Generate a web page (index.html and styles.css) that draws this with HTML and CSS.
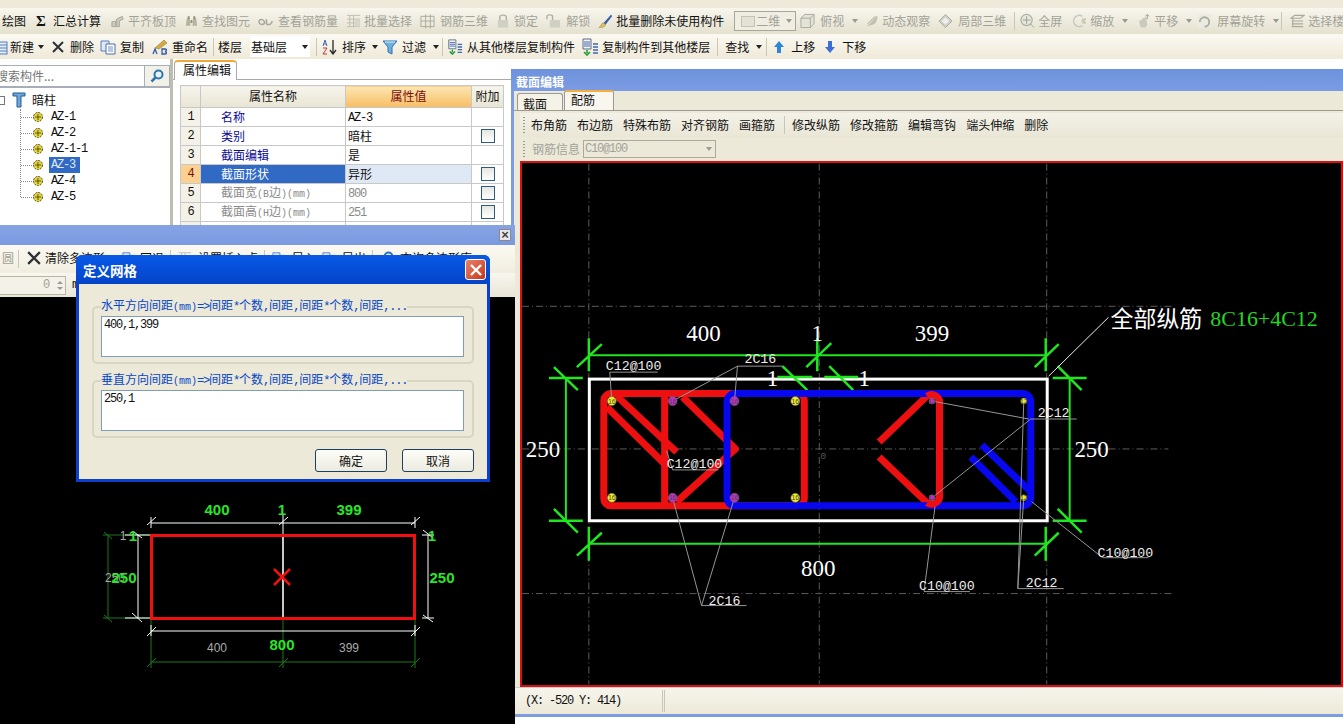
FILE: index.html
```html
<!DOCTYPE html>
<html lang="zh-CN">
<head>
<meta charset="utf-8">
<title>截面编辑</title>
<link rel="stylesheet" href="styles.css">
</head>
<body>
<svg class="defs" aria-hidden="true">
  <symbol id="i-align" viewBox="0 0 16 16"><path d="M2 14V9l4-1v6zM7 14V6l6-3 1 3-4 2v6z" fill="#c9c9bd" stroke="#a9a99c"/></symbol>
  <symbol id="i-find" viewBox="0 0 16 16"><path d="M2 13l1-8h3l1 8zM9 13l1-8h3l1 8z" fill="#b7b29c"/><path d="M4 3h2v3H4zM10 3h2v3h-2zM7 7h2v3H7z" fill="#8f8c7a"/></symbol>
  <symbol id="i-look" viewBox="0 0 16 16"><path d="M1 9c0-4 5-3 6 0 0 3-5 4-6 0zM9 6v5c3 2 6 0 6-3" fill="none" stroke="#a6a69a" stroke-width="1.6"/></symbol>
  <symbol id="i-batch" viewBox="0 0 16 16"><path d="M1 2h14M1 6h14M1 10h14M1 14h14M4 2v12M8 2v12" stroke="#bdbdb0" fill="none"/><path d="M9 7h6v7H9z" fill="#d6d6ca"/></symbol>
  <symbol id="i-bar3d" viewBox="0 0 16 16"><path d="M1 3h14v11H1zM6 1v15M11 1v15M1 8h14" fill="none" stroke="#a9a99c"/></symbol>
  <symbol id="i-lock" viewBox="0 0 16 16"><rect x="2" y="7" width="11" height="8" fill="#cfcfc4"/><path d="M4 7V4c0-3 7-3 7 0v3" fill="none" stroke="#b0b0a4" stroke-width="1.5"/></symbol>
  <symbol id="i-unlock" viewBox="0 0 16 16"><rect x="4" y="7" width="11" height="8" fill="#cfcfc4"/><path d="M1 6V3c0-2 6-2 6 0v4" fill="none" stroke="#b0b0a4" stroke-width="1.5"/></symbol>
  <symbol id="i-brush" viewBox="0 0 16 16"><path d="M14 1L6 10l2 2 7-9z" fill="#3a5fa8"/><path d="M6 10c-3 0-2 3-5 5 4 0 7-1 7-3z" fill="#e0c060" stroke="#8a7a30" stroke-width=".5"/></symbol>
  <symbol id="i-cube" viewBox="0 0 16 16"><path d="M1 5l4-4h10v10l-4 4H1zM1 5h10v10M11 5l4-4" fill="#e4e3d8" stroke="#aaa99c"/></symbol>
  <symbol id="i-orbit" viewBox="0 0 16 16"><path d="M2 14l4-3 8-9c1 4-1 9-5 10-3 1-5 1-7 2z" fill="#bfc2ad"/><path d="M4 11l8-8" stroke="#9c9f8a" fill="none"/></symbol>
  <symbol id="i-local" viewBox="0 0 16 16"><path d="M8 1l7 7-7 7-7-7z" fill="#cfcfc4" stroke="#aaa99c"/><path d="M4 8l4-4 4 4-4 4z" fill="#eee"/></symbol>
  <symbol id="i-full" viewBox="0 0 16 16"><circle cx="7" cy="7" r="6" fill="#e6e6dc" stroke="#a9b2a4" stroke-width="1.3"/><path d="M7 3v8M3 7h8M11 11l4 4" stroke="#9aa095" fill="none"/></symbol>
  <symbol id="i-zoom" viewBox="0 0 16 16"><path d="M11 3a6 6 0 1 0 0 10" fill="none" stroke="#c3c8c0" stroke-width="1.6"/><path d="M11 6h4M10 8h4M11 10h4" stroke="#a9a99c"/></symbol>
  <symbol id="i-pan" viewBox="0 0 16 16"><path d="M3 8l3-1 1-2 4-1 1 8-2 3H5z" fill="#c9c9bd"/><path d="M12 1v5M10 3l2-2 2 2" stroke="#9c9c90" fill="none"/></symbol>
  <symbol id="i-rot" viewBox="0 0 16 16"><rect x="1" y="1" width="14" height="14" fill="#ecebe2"/><path d="M3 9a5 5 0 1 1 5 5" fill="none" stroke="#a8aea2" stroke-width="2"/></symbol>
  <symbol id="i-layer" viewBox="0 0 16 16"><path d="M1 5l4-3h10L11 5zM2 8h12M2 11h12M2 14h12M3 5v9" fill="none" stroke="#aaa99c" stroke-width="1.2"/></symbol>
  <symbol id="i-new" viewBox="0 0 16 16"><rect x="1" y="3" width="14" height="12" fill="#e8eef8" stroke="#4f7fc0"/><path d="M1 6h14M1 9h14M1 12h14" stroke="#4f7fc0"/></symbol>
  <symbol id="i-x" viewBox="0 0 12 12"><path d="M1 1l10 10M11 1L1 11" stroke="#2e3238" stroke-width="2" fill="none"/></symbol>
  <symbol id="i-x-w" viewBox="0 0 12 12"><path d="M1 1l10 10M11 1L1 11" stroke="#fff" stroke-width="2.4" fill="none"/></symbol>
  <symbol id="i-copy" viewBox="0 0 16 16"><path d="M1 2h8v10H1z" fill="#dfe8f7" stroke="#5a7fb8"/><path d="M6 5h9v10H6z" fill="#fff" stroke="#4a6fa8"/><path d="M8 8h5M8 10h5M8 12h5" stroke="#6f8fc0"/></symbol>
  <symbol id="i-ren" viewBox="0 0 16 16"><path d="M3 9l9-8 3 3-8 6z" fill="#d9a93f" stroke="#7a8a50" stroke-width=".6"/><path d="M1 15l2-5 2 5M10 15v-5h3c2 0 2 2 0 2.5 2 .5 2 2.5 0 2.5z" fill="none" stroke="#2f5aa8" stroke-width="1.3"/></symbol>
  <symbol id="i-az" viewBox="0 0 16 16"><path d="M1 7l2-6 2 6M2 5h2" stroke="#3f66b8" fill="none"/><path d="M1 9h4l-4 6h4" stroke="#c03a30" fill="none"/><path d="M11 1v13M8 11l3 4 3-4" stroke="#2a2a2a" fill="none" stroke-width="1.3"/></symbol>
  <symbol id="i-filter" viewBox="0 0 16 16"><path d="M1 2h14L10 8v7l-4-2V8z" fill="#6fb0e0" stroke="#2f74b0"/><path d="M3 3h10" stroke="#d8f0ff"/></symbol>
  <symbol id="i-cfrom" viewBox="0 0 18 18"><path d="M2 1h8v10H2z" fill="#f4f4f4" stroke="#5a6a80"/><path d="M3 4h6M3 6h6M3 8h6" stroke="#3f66b8"/><path d="M6 12v3M3 14l3 3 3-3" stroke="#1f9a3a" stroke-width="1.6" fill="none"/><path d="M12 6h5M12 9h5M12 12h5M12 15h5" stroke="#3f66b8" stroke-width="1.5"/></symbol>
  <symbol id="i-up" viewBox="0 0 10 12"><path d="M5 0l5 6H7v6H3V6H0z" fill="#2f86d8"/></symbol>
  <symbol id="i-down" viewBox="0 0 10 12"><path d="M5 12l5-6H7V0H3v6H0z" fill="#3f6ed8"/></symbol>
  <symbol id="i-funnel" viewBox="0 0 14 16"><path d="M1 1h12v3H9v11H5V4H1z" fill="#6fa8d8" stroke="#1f5a98"/></symbol>
  <symbol id="i-gear" viewBox="0 0 12 12"><circle cx="6" cy="6" r="4.5" fill="#e6d83a" stroke="#4a4a20" stroke-dasharray="2 1"/><path d="M3 6h6M6 3v6" stroke="#55551f"/></symbol>
  <symbol id="i-search" viewBox="0 0 14 14"><circle cx="8.5" cy="5.5" r="4" fill="#e8f2fb" stroke="#2f74b0" stroke-width="2"/><path d="M5.5 8.5L1.5 12.5" stroke="#2f74b0" stroke-width="2.5"/></symbol>
</svg>

<div class="app">
  <div class="topstrip"></div>
  <div class="toolbar bar-one">
    <span class="tool">绘图</span>
    <b class="sigma ml2">Σ</b>
    <span class="tool ml1">汇总计算</span>
    <span class="tool off n ml1"><svg class="ic"><use href="#i-align"/></svg>平齐板顶</span>
    <span class="tool off n"><svg class="ic"><use href="#i-find"/></svg>查找图元</span>
    <span class="tool off w"><svg class="ic"><use href="#i-look"/></svg>查看钢筋量</span>
    <span class="tool off n"><svg class="ic"><use href="#i-batch"/></svg>批量选择</span>
    <span class="tool off w"><svg class="ic"><use href="#i-bar3d"/></svg>钢筋三维</span>
    <span class="tool off n"><svg class="ic"><use href="#i-lock"/></svg>锁定</span>
    <span class="tool off w"><svg class="ic"><use href="#i-unlock"/></svg>解锁</span>
    <span class="tool n"><svg class="ic"><use href="#i-brush"/></svg>批量删除未使用构件</span>
    <span class="viewbox ml2"><i class="viewicon"></i>二维<i class="caret gray"></i></span>
    <span class="tool off w ml-4"><svg class="ic"><use href="#i-cube"/></svg>俯视</span><i class="caret gray"></i>
    <span class="tool off n ml-2"><svg class="ic"><use href="#i-orbit"/></svg>动态观察</span>
    <span class="tool off w"><svg class="ic"><use href="#i-local"/></svg>局部三维</span>
    <i class="sep"></i>
    <span class="tool off n ml-3"><svg class="ic"><use href="#i-full"/></svg>全屏</span>
    <span class="tool off n ml2"><svg class="ic"><use href="#i-zoom"/></svg>缩放</span><i class="caret gray"></i>
    <span class="tool off n"><svg class="ic"><use href="#i-pan"/></svg>平移</span><i class="caret gray"></i>
    <span class="tool off w ml-3"><svg class="ic"><use href="#i-rot"/></svg>屏幕旋转</span><i class="caret gray"></i>
    <i class="sep ml-6"></i>
    <span class="tool off n"><svg class="ic"><use href="#i-layer"/></svg>选择楼层</span>
  </div>
  <div class="toolbar bar-two">
    <span class="tool t2 clip-new"><svg class="ic"><use href="#i-new"/></svg>新建</span><i class="caret ml-4"></i>
    <span class="tool del"><svg class="ic12"><use href="#i-x"/></svg>删除</span>
    <span class="tool t4 ml-2"><svg class="ic"><use href="#i-copy"/></svg>复制</span>
    <span class="tool t4"><svg class="ic"><use href="#i-ren"/></svg>重命名</span>
    <i class="sep ml-3"></i>
    <span class="tool ml-4">楼层</span>
    <span class="floor">基础层<i class="caret"></i></span>
    <i class="sep ml-2"></i>
    <span class="tool t4 ml-3"><svg class="ic"><use href="#i-az"/></svg>排序</span><i class="caret ml-2"></i>
    <span class="tool t4 ml-4"><svg class="ic"><use href="#i-filter"/></svg>过滤</span><i class="caret ml-1"></i>
    <i class="sep ml-5"></i>
    <span class="tool t4 ml-4"><svg class="ic"><use href="#i-cfrom"/></svg>从其他楼层复制构件</span>
    <span class="tool n ml-2"><svg class="ic18"><use href="#i-cfrom"/></svg>复制构件到其他楼层</span>
    <i class="sep ml-1"></i>
    <span class="tool ml-1">查找</span><i class="caret ml-1"></i>
    <i class="sep ml-4"></i>
    <span class="tool t7 ml-1"><svg class="ic10"><use href="#i-up"/></svg>上移</span>
    <span class="tool t7 ml2"><svg class="ic10"><use href="#i-down"/></svg>下移</span>
  </div>

  <div class="main">
    <aside class="leftpane">
      <div class="search">
        <span class="search-text">搜索构件...</span>
        <span class="search-btn"><svg class="ic14"><use href="#i-search"/></svg></span>
      </div>
      <div class="tree">
        <div class="tree-root"><i class="expander"></i><svg class="funnel"><use href="#i-funnel"/></svg><span>暗柱</span></div>
        <ul class="tree-list">
          <li class="tree-row"><i class="dash"></i><svg class="ic12"><use href="#i-gear"/></svg><span class="tree-label">AZ-1</span></li>
          <li class="tree-row"><i class="dash"></i><svg class="ic12"><use href="#i-gear"/></svg><span class="tree-label">AZ-2</span></li>
          <li class="tree-row"><i class="dash"></i><svg class="ic12"><use href="#i-gear"/></svg><span class="tree-label">AZ-1-1</span></li>
          <li class="tree-row"><i class="dash"></i><svg class="ic12"><use href="#i-gear"/></svg><span class="tree-label selected">AZ-3</span></li>
          <li class="tree-row"><i class="dash"></i><svg class="ic12"><use href="#i-gear"/></svg><span class="tree-label">AZ-4</span></li>
          <li class="tree-row"><i class="dash"></i><svg class="ic12"><use href="#i-gear"/></svg><span class="tree-label">AZ-5</span></li>
        </ul>
      </div>
    </aside>
    <section class="props">
      <div class="props-tabs"><span class="props-tab">属性编辑</span></div>
      <table class="ptable">
        <colgroup><col class="c-idx"><col class="c-name"><col class="c-val"><col class="c-add"></colgroup>
        <thead><tr><th></th><th>属性名称</th><th class="th-val">属性值</th><th>附加</th></tr></thead>
        <tbody>
          <tr><td class="idx">1</td><td class="pname">名称</td><td class="pval"><span class="m">AZ-3</span></td><td></td></tr>
          <tr><td class="idx">2</td><td class="pname">类别</td><td class="pval">暗柱</td><td class="add"><i class="check"></i></td></tr>
          <tr><td class="idx">3</td><td class="pname">截面编辑</td><td class="pval">是</td><td></td></tr>
          <tr class="sel"><td class="idx">4</td><td class="pname">截面形状</td><td class="pval">异形</td><td class="add"><i class="check"></i></td></tr>
          <tr class="dim"><td class="idx">5</td><td class="pname">截面宽<span class="mm">(B</span>边<span class="mm">)(mm)</span></td><td class="pval"><span class="m">800</span></td><td class="add"><i class="check"></i></td></tr>
          <tr class="dim"><td class="idx">6</td><td class="pname">截面高<span class="mm">(H</span>边<span class="mm">)(mm)</span></td><td class="pval"><span class="m">251</span></td><td class="add"><i class="check"></i></td></tr>
          <tr><td class="idx">7</td><td></td><td></td><td></td></tr>
        </tbody>
      </table>
    </section>
  </div>

  <section class="win-section">
    <header class="win-title">截面编辑</header>
    <div class="sec-tabs"><span class="sec-tab">截面</span><span class="sec-tab active">配筋</span></div>
    <div class="sec-tools">
      <i class="grip"></i>
      <span>布角筋</span><span>布边筋</span><span>特殊布筋</span><span>对齐钢筋</span><span>画箍筋</span>
      <i class="sep"></i>
      <span>修改纵筋</span><span>修改箍筋</span><span>编辑弯钩</span><span>端头伸缩</span><span>删除</span>
    </div>
    <div class="sec-info">
      <i class="grip"></i>
      <span class="off">钢筋信息</span>
      <span class="sec-combo"><span class="m">C10@100</span><i class="caret gray"></i></span>
    </div>
    <div class="sec-canvas">
      <svg class="drawing" viewBox="522 164 821 522">
        <g class="cl">
          <path d="M522 307H1175M522 450H1170M522 595H1175M589 164V686M820 164V686M1048 164V686"/>
        </g>
        <rect class="white-box" x="589.5" y="380" width="459" height="142"/>
        <g class="dimg">
          <path d="M589 356H1048M589 545H1048M566 379V522M1071 379V522"/>
          <path d="M589 339V372M577 368L602 345M818 339V372M807 368L832 344M1047 339V372M1036 368L1060 345"/>
          <path d="M589 528V562M577 557L602 534M1047 528V562M1036 557L1060 534"/>
          <path d="M549 379H583M554 368L578 391M549 522H583M554 510L578 534"/>
          <path d="M1054 379H1088M1059 367L1083 391M1054 522H1088M1059 510L1083 534"/>
          <path d="M778 378H813M825 378H859M783 367L808 391M830 367L854 391"/>
        </g>
        <g class="red">
          <rect x="604" y="394.5" width="201" height="112.5" rx="7"/>
          <path d="M665 394V507M617 397L677 453M607 408L667 467M683 398L736 450L677 503M880 443L928 397A8 8 0 0 1 940.5 403V498A8 8 0 0 1 928 504L880 458"/>
        </g>
        <g class="blue">
          <rect x="727.5" y="394.5" width="304.5" height="112.5" rx="8"/>
          <path d="M983 446L1031 492M972 458L1017 503"/>
        </g>
        <path class="red-over" d="M928 397A8 8 0 0 1 940.5 403V498A8 8 0 0 1 928 504"/>
        <g class="leader">
          <path d="M610 373H658M610 373L612 402M738 367H783M738 367L673 402M738 367L735 402"/>
          <path d="M673 471H719M667 452L673 471M702 607H747M702 607L673 499M702 607L735 499"/>
          <path d="M1032 420H1078M933 402L1030 420M933 499L1032 420M1025 402L1019 590M1025 499L1019 590M1019 590H1065"/>
          <path d="M925 593H971M925 593L936 508M1104 559H1150M1104 559L1033 503"/>
        </g>
        <path class="white-line" d="M1050 377L1110 318"/>
        <g class="rebar-y">
          <circle cx="612" cy="402" r="4.5"/><circle cx="612" cy="499" r="4.5"/><circle cx="796" cy="402" r="4.5"/><circle cx="796" cy="499" r="4.5"/>
          <circle cx="1025" cy="402" r="3"/><circle cx="1025" cy="499" r="3"/>
        </g>
        <g class="rebar-m">
          <circle cx="673" cy="402" r="4.5"/><circle cx="673" cy="499" r="4.5"/><circle cx="735" cy="402" r="4.5"/><circle cx="735" cy="499" r="4.5"/>
          <circle cx="933" cy="402" r="3"/><circle cx="933" cy="499" r="3"/>
        </g>
        <g class="rebar-t">
          <text x="612" y="404.5">16</text><text x="612" y="501.5">16</text><text x="796" y="404.5">16</text><text x="796" y="501.5">16</text>
          <text x="673" y="404.5">16</text><text x="673" y="501.5">16</text><text x="735" y="404.5">16</text><text x="735" y="501.5">16</text>
          <text x="933" y="404.5">12</text><text x="933" y="501.5">12</text><text x="1025" y="404.5">12</text><text x="1025" y="501.5">12</text>
        </g>
        <g class="bignum">
          <text x="704" y="342">400</text><text x="818" y="342">1</text><text x="933" y="342">399</text>
          <text x="543" y="458">250</text><text x="1093" y="458">250</text><text x="819" y="577">800</text>
          <text x="773" y="387">1</text><text x="865" y="387">1</text>
        </g>
        <g class="label">
          <text x="606" y="371">C12@100</text><text x="745" y="364">2C16</text>
          <text x="667" y="469">C12@100</text><text x="709" y="606">2C16</text>
          <text x="1039" y="418">2C12</text><text x="1027" y="588">2C12</text>
          <text x="920" y="591">C10@100</text><text x="1099" y="558">C10@100</text>
        </g>
        <text class="zero" x="821" y="460">0</text>
        <text class="allbar" x="1112" y="328">全部纵筋</text>
        <text class="allbar-v" x="1212" y="327">8C16+4C12</text>
      </svg>
    </div>
    <footer class="sec-status"><span class="m coord">(X: -520 Y: 414)</span><i class="status-div"></i></footer>
  </section>

  <section class="win-grid">
    <header class="grid-title"><span class="grid-close">×</span></header>
    <div class="grid-tools">
      <span class="off ml2">圆</span>
      <i class="sep"></i>
      <span class="tool del-2"><svg class="ic14"><use href="#i-x"/></svg>清除多边形</span>
      <span class="tool undo"><svg class="ic14"><use href="#i-copy"/></svg>回退</span>
      <i class="sep"></i>
      <span class="tool"><svg class="ic14"><use href="#i-batch"/></svg>设置插入点</span>
      <i class="sep"></i>
      <span class="tool"><svg class="ic14"><use href="#i-copy"/></svg>导入</span>
      <span class="tool"><svg class="ic14"><use href="#i-copy"/></svg>导出</span>
      <i class="sep"></i>
      <span class="tool"><svg class="ic14"><use href="#i-search"/></svg>查询多边形库</span>
    </div>
    <div class="grid-fields">
      <span class="spin"><span class="m off">0</span><i class="spin-btn"><i class="up"></i><i class="down"></i></i></span>
      <span class="m">m</span>
    </div>
    <div class="grid-canvas">
      <svg class="drawing" viewBox="0 297 515 427">
        <g class="dk">
          <path d="M108 535V618M103 535H151M103 618H151M104 532L112 539M104 615L112 622"/>
          <path d="M151 618V668M283 618V668M415 618V668M151 662H415M147 667L156 658M279 667L288 658M411 667L420 658"/>
        </g>
        <g class="wh">
          <path d="M151 523H415M151 517V528M415 517V528M147 525L156 517M411 525L420 517"/>
          <path d="M283 515V535M279 525L288 517"/>
          <path d="M138 535V618M125 535H151M125 618H151M134 532L142 538M132 613L142 622"/>
          <path d="M428 535V618M422 535H434M422 618H434M423 530L433 538M423 615L433 622"/>
          <path d="M151 631H415M151 625V636M415 625V636M147 636L156 627M411 636L420 627"/>
        </g>
        <rect class="red-rect" x="151.5" y="535.5" width="263" height="83"/>
        <path class="gr-mid" d="M283 537V617"/>
        <path class="red-x" d="M274 569L290 585M290 569L274 585"/>
        <g class="gray-t">
          <text x="217" y="652">400</text><text x="349" y="652">399</text><text x="115" y="582">250</text><text x="123" y="540">1</text>
        </g>
        <g class="green-t">
          <text x="217" y="515">400</text><text x="349" y="515">399</text><text x="282" y="515">1</text>
          <text x="124" y="583">250</text><text x="442" y="583">250</text><text x="133" y="541">1</text><text x="432" y="541">1</text>
          <text x="282" y="650">800</text>
        </g>
      </svg>
    </div>
  </section>

  <div class="dialog">
    <header class="dlg-title"><span>定义网格</span><span class="dlg-close"><svg class="ic12"><use href="#i-x-w"/></svg></span></header>
    <div class="dlg-body">
      <fieldset class="dlg-group">
        <legend>水平方向间距<span class="mm">(mm)</span><span class="m">=&gt;</span>间距<span class="m">*</span>个数<span class="m">,</span>间距<span class="m">,</span>间距<span class="m">*</span>个数<span class="m">,</span>间距<span class="m">,...</span></legend>
        <div class="dlg-input m">400,1,399</div>
      </fieldset>
      <fieldset class="dlg-group second">
        <legend>垂直方向间距<span class="mm">(mm)</span><span class="m">=&gt;</span>间距<span class="m">*</span>个数<span class="m">,</span>间距<span class="m">,</span>间距<span class="m">*</span>个数<span class="m">,</span>间距<span class="m">,...</span></legend>
        <div class="dlg-input m">250,1</div>
      </fieldset>
      <div class="dlg-actions"><button class="btn">确定</button><button class="btn">取消</button></div>
    </div>
  </div>
</div>
</body>
</html>
```

FILE: styles.css
```css
* { box-sizing: border-box; }
html, body { margin: 0; padding: 0; height: 100%; overflow: hidden; background: #fff; }
body { font: 12px/16px "Noto Sans CJK SC", "Liberation Sans", sans-serif; color: #111; }
i { font-style: normal; display: block; flex: none; }
.defs { position: absolute; width: 0; height: 0; }
.app { position: relative; width: 1343px; height: 724px; overflow: hidden; }
.m { font-family: "Liberation Mono", "Noto Sans CJK SC", monospace; font-size: 12px; letter-spacing: -1.2px; }
.mm { font-family: "Liberation Mono", monospace; font-size: 10px; }
.off { color: #a2a298; }

.topstrip { height: 8px; background: #efe9d9; }
.toolbar { display: flex; align-items: center; gap: 8px; white-space: nowrap; overflow: hidden; }
.bar-one { height: 26px; padding-left: 2px; background: linear-gradient(#f8f6ee, #e4e1ce); }
.bar-two { height: 25px; background: linear-gradient(#fbf9f2, #efe9d8); }
.tool { display: inline-flex; align-items: center; gap: 3px; flex: none; }
.tool.w { gap: 5px; }
.tool.t2 { gap: 2px; }
.tool.t4 { gap: 4px; }
.tool.t7 { gap: 7px; }
.tool.del { gap: 6px; }
.ic { width: 15px; height: 16px; flex: none; }
.bar-two .ic { width: 16px; }
.ic18 { width: 18px; height: 18px; flex: none; }
.ic14 { width: 14px; height: 14px; flex: none; }
.ic12 { width: 12px; height: 12px; flex: none; }
.ic10 { width: 10px; height: 12px; flex: none; }
.sigma { width: 8px; font: bold 15px/16px "Liberation Serif", serif; flex: none; }
.caret { width: 0; height: 0; border: 3px solid transparent; border-top: 4px solid #222; border-bottom: 0; }
.caret.gray { border-top-color: #9a9a90; }
.sep { width: 1px; height: 18px; background: #c9c6b3; }
.ml1 { margin-left: 1px; } .ml2 { margin-left: 2px; }
.ml-1 { margin-left: -1px; } .ml-2 { margin-left: -2px; } .ml-3 { margin-left: -3px; }
.ml-4 { margin-left: -4px; } .ml-5 { margin-left: -5px; } .ml-6 { margin-left: -6px; }
.clip-new { margin-left: -8px; }
.viewbox { display: flex; align-items: center; width: 62px; height: 20px; border: 1px solid #a8a898; color: #a2a298; background: #f0eee2; padding-left: 6px; flex: none; }
.viewicon { width: 14px; height: 11px; background: #e4e2d4; border: 1px solid #c4c2b4; margin-right: 1px; }
.viewbox .caret { margin-left: 6px; }
.floor { display: flex; align-items: center; width: 60px; height: 21px; background: #fff; padding-left: 1px; flex: none; justify-content: space-between; padding-right: 2px; }

.main { display: flex; height: 166px; }
.leftpane { width: 170px; flex: none; overflow: hidden; padding-top: 6px; }
.search { display: flex; height: 23px; border: 1px solid #a8aeb8; border-bottom-width: 2px; border-left: 0; }
.search-text { flex: 1; color: #777; margin-left: -4px; line-height: 20px; white-space: nowrap; }
.search-btn { width: 25px; display: flex; align-items: center; justify-content: center; border-left: 1px solid #a8aeb8; background: #f2f1e8; }
.tree { padding-top: 4px; }
.tree-root { display: flex; align-items: center; height: 16px; }
.expander { width: 5px; height: 9px; border: 1px solid #777; border-left: 0; margin-right: 7px; }
.funnel { width: 14px; height: 16px; margin-right: 6px; }
.tree-list { list-style: none; margin: 1px 0 0 20px; padding: 0; height: 88px; border-left: 1px dotted #888; }
.tree-row { display: flex; align-items: center; height: 16px; font: 12px/16px "Liberation Mono", monospace; letter-spacing: -1.2px; }
.dash { width: 11px; border-top: 1px dotted #888; }
.tree-label { margin-left: 5px; padding: 0 5px 0 2px; height: 16px; }
.tree-label.selected { background: #316ac5; color: #dfe7f6; width: 31px; }

.props { flex: 1; margin-left: 3px; box-shadow: -3px 0 0 #bdbdb0; overflow: hidden; }
.props-tabs { height: 21px; padding-left: 1px; padding-top: 1px; border-bottom: 1px solid #aaa; }
.props-tab { display: inline-block; width: 63px; height: 20px; padding: 0 0 0 8px; background: #fff; border: 1px solid #aaa; border-top: 2px solid #f0a838; border-bottom: 0; border-radius: 4px 4px 0 0; line-height: 15px; }
.ptable { border-collapse: collapse; table-layout: fixed; width: 323px; margin: 5px 0 0 7px; line-height: 14px; }
.c-idx { width: 20px; } .c-name { width: 145px; } .c-val { width: 126px; } .c-add { width: 32px; }
.ptable th, .ptable td { border: 1px solid #c8c8c8; padding: 0; height: 19px; font-weight: 400; overflow: hidden; }
.ptable tbody tr { height: 19px; }
.ptable th { height: 22px; padding-bottom: 2px; background: linear-gradient(#f7f5ec, #e8e5d4); text-align: center; }
.ptable .th-val { background: linear-gradient(#fce6b4, #f8bd62); color: #7a0f0f; }
.ptable .idx { text-align: center; background: #f4f2e8; font: 12px/14px "Liberation Mono", monospace; letter-spacing: -1.2px; }
.ptable .pname { padding-left: 20px; color: #0a0a96; }
.ptable .pval { padding-left: 2px; }
.add { text-align: center; }
.check { width: 14px; height: 14px; margin: 0 auto; border: 1px solid #2c5a80; background: linear-gradient(#e6e6e0, #fff); }
.ptable .sel .idx { background: #fcd08e; color: #7a0f0f; }
.ptable .sel .pname { background: #316ac5; color: #fff; }
.ptable .sel .pval { background: #dfe8f5; }
.ptable .dim .pname, .ptable .dim .pval { color: #8a8a8a; }

.win-section { position: absolute; z-index: 1; left: 511px; top: 69px; width: 832px; height: 648px; display: flex; flex-direction: column; background: #ece9d8; border-left: 3px solid #7e9de0; border-bottom: 3px solid #7e9de0; }
.win-title { height: 22px; flex: none; background: linear-gradient(#6e92dc, #7c9ce4); color: #fff; font-weight: 700; line-height: 25px; margin-left: -3px; padding-left: 5px; }
.sec-tabs { height: 20px; flex: none; display: flex; align-items: flex-end; padding-left: 3px; border-bottom: 1px solid #9c9c90; }
.sec-tab { width: 46px; height: 17px; padding-left: 5px; background: #f5f3e8; border: 1px solid #999; border-bottom: 0; border-radius: 3px 3px 0 0; line-height: 19px; }
.sec-tab.active { width: 50px; height: 20px; padding-left: 6px; background: #f8f6ee; border-top: 2px solid #f4ae3c; line-height: 16px; margin-left: 1px; }
.sec-tools { height: 24px; margin-top: 2px; flex: none; margin-left: 6px; display: flex; align-items: center; gap: 10px; background: linear-gradient(#f4f2e8, #e9e6d6); white-space: nowrap; }
.grip { width: 2px; height: 16px; margin-left: 3px; margin-right: -2px; background-image: linear-gradient(#9a9a8e 50%, transparent 50%); background-size: 2px 3px; }
.sec-tools .grip { margin-right: -4px; }
.sec-tools .sep { margin: 0 -3px 0 -1px; }
.sec-info { height: 24px; flex: none; margin-left: 6px; display: flex; align-items: center; gap: 3px; white-space: nowrap; }
.sec-info .grip { margin-right: 4px; }
.sec-combo { display: flex; align-items: center; justify-content: space-between; width: 133px; height: 18px; border: 1px solid #aaa99c; color: #a2a298; padding: 0 3px 0 1px; }
.sec-canvas { height: 526px; flex: none; margin-left: 6px; border: 2px solid #d81010; background: #000; }
.drawing { display: block; width: 100%; height: 100%; }
.sec-status { flex: 1; display: flex; align-items: center; padding-left: 11px; background: linear-gradient(#f7f5ec, #ece9d8); border-top: 1px solid #ccc; }
.coord { color: #111; width: 137px; }
.status-div { width: 3px; height: 22px; border-left: 1px solid #c8c6b8; border-right: 1px solid #c8c6b8; }

.cl path { fill: none; stroke: #5c5c5c; stroke-width: 1; stroke-dasharray: 7 3 1 3; }
.white-box { fill: none; stroke: #fff; stroke-width: 3; }
.dimg path { fill: none; stroke: #1fe61f; stroke-width: 2.5; }
.dimg path:first-child { stroke-width: 2; }
.red rect, .red path { fill: none; stroke: #ee1010; stroke-width: 7; stroke-linejoin: round; }
.red-over { fill: none; stroke: #ee1010; stroke-width: 7; }
.blue rect, .blue path { fill: none; stroke: #0808f0; stroke-width: 7; }
.leader path { fill: none; stroke: #969696; stroke-width: 1; }
.white-line { fill: none; stroke: #eee; stroke-width: 1; }
.rebar-y circle { fill: #f4ee20; stroke: #666; stroke-width: .6; }
.rebar-m circle { fill: #c030c8; stroke: #666; stroke-width: .6; }
.rebar-t text { fill: #444; font: 7px "Liberation Sans", sans-serif; text-anchor: middle; }
.bignum text { fill: #fff; font: 23px "Liberation Serif", serif; text-anchor: middle; }
.label text { fill: #eee; font: 13.3px "Liberation Mono", monospace; }
.zero { fill: #555; font: 10px "Liberation Mono", monospace; }
.allbar { fill: #fff; font: 23px "Noto Sans CJK SC", sans-serif; }
.allbar-v { fill: #22d622; font: 22px "Liberation Serif", serif; }

.win-grid { position: absolute; z-index: 2; left: 0; top: 225px; width: 515px; height: 499px; display: flex; flex-direction: column; background: #ece9d8; }
.grid-title { height: 20px; flex: none; display: flex; justify-content: flex-end; align-items: center; padding-right: 4px; background: linear-gradient(#86a3e4, #7a99e0); }
.grid-close { width: 12px; height: 12px; background: #e8e8e8; border: 1px solid #8a8a8a; color: #444; font: bold 13px/10px "Liberation Sans", sans-serif; text-align: center; }
.grid-tools { height: 28px; flex: none; display: flex; align-items: flex-start; padding-top: 5px; gap: 6px; white-space: nowrap; overflow: hidden; background: linear-gradient(#fbf9f2, #f1eee0); }
.grid-tools .tool { gap: 6px; }
.grid-tools .sep { margin-right: 1px; }
.grid-tools .sep:nth-child(2) { margin-left: -2px; }
.grid-tools .del-2 { gap: 4px; margin-left: 1px; }
.grid-tools .undo { gap: 4px; margin-left: 11px; }
.grid-fields { height: 24px; flex: none; display: flex; align-items: center; gap: 6px; background: linear-gradient(#f8f6ee, #e9e6d6); }
.spin { display: flex; align-items: center; justify-content: flex-end; width: 66px; height: 19px; border: 1px solid #b8b6a8; border-left: 0; background: #f4f2e8; gap: 8px; padding-right: 2px; }
.spin-btn { display: flex; flex-direction: column; gap: 3px; }
.spin-btn .up { border: 3px solid transparent; border-bottom: 3px solid #999; border-top: 0; width: 0; }
.spin-btn .down { border: 3px solid transparent; border-top: 3px solid #999; border-bottom: 0; width: 0; }
.grid-canvas { flex: 1; background: #000; }
.dk path { fill: none; stroke: #1a7a1a; stroke-width: 1; }
.wh path { fill: none; stroke: #fff; stroke-width: 1; }
.red-rect { fill: none; stroke: #f01010; stroke-width: 3; }
.gr-mid { stroke: #c8c8c8; stroke-width: 2; fill: none; }
.red-x { stroke: #f01010; stroke-width: 2.5; fill: none; }
.gray-t text { fill: #aaa; font: 12px "Liberation Sans", sans-serif; text-anchor: middle; }
.green-t text { fill: #28e628; font: bold 15px "Liberation Sans", sans-serif; text-anchor: middle; }

.dialog { position: absolute; z-index: 3; left: 76px; top: 255px; width: 414px; height: 227px; border-radius: 6px 6px 0 0; background: #0a3fd0; padding: 0 3px 3px; display: flex; flex-direction: column; }
.dlg-title { height: 29px; flex: none; margin: 0 -3px; padding: 0 4px 0 7px; display: flex; align-items: center; justify-content: space-between; color: #fff; font-size: 13.5px; font-weight: 700; border-radius: 6px 6px 0 0; background: linear-gradient(#0a5ae6, #0653de 30%, #0444c8); }
.dlg-close { width: 21px; height: 21px; display: flex; align-items: center; justify-content: center; background: linear-gradient(135deg, #e8826a, #c83818); border: 1px solid #fff; border-radius: 3px; }
.dlg-body { flex: 1; background: #ece9d8; padding: 13px 13px 0; }
.dlg-group { margin: 0; padding: 0 8px 6px 7px; border: 2px solid #d8d5c4; border-radius: 5px; min-width: 0; height: 67px; }
.dlg-group legend { padding: 0; color: #0646c8; line-height: 16px; white-space: nowrap; }
.dlg-group.second { margin-top: 7px; }
.dlg-input { height: 41px; background: #fff; border: 1px solid #7f9db9; padding: 0 2px; color: #111; line-height: 16px; }
.dlg-actions { display: flex; justify-content: flex-end; gap: 15px; margin-top: 11px; }
.btn { width: 72px; height: 23px; padding: 0; font: inherit; color: #111; background: linear-gradient(#fdfdf8, #ecebe0); border: 1px solid #1f3f5f; border-radius: 3px; }
```
